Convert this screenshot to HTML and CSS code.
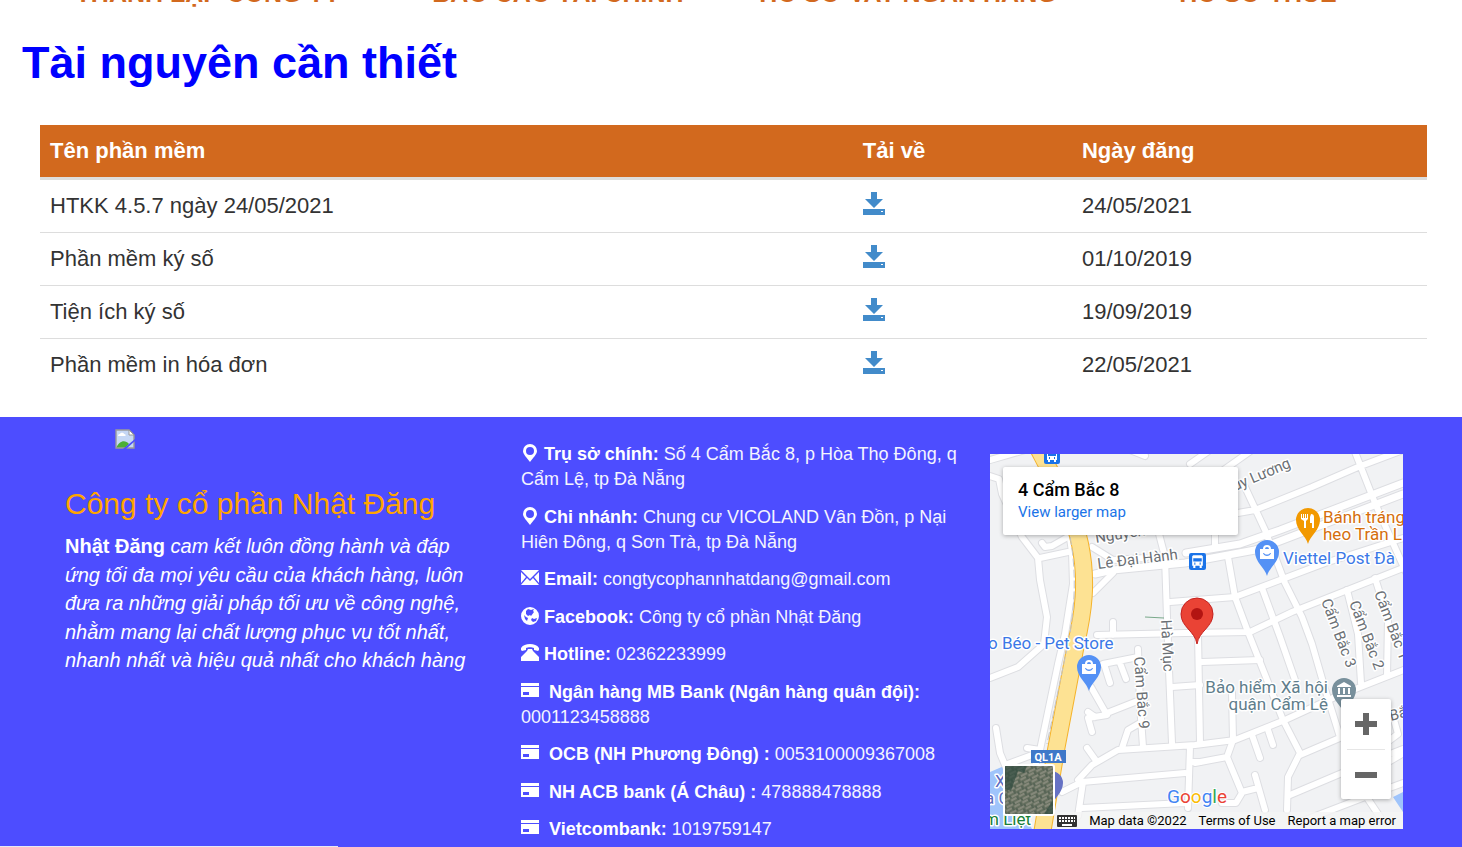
FILE: index.html
```html
<!DOCTYPE html>
<html lang="vi">
<head>
<meta charset="utf-8">
<meta name="viewport" content="width=device-width, initial-scale=1">
<title>Tài nguyên cần thiết</title>
<link rel="stylesheet" href="styles.css">
</head>
<body>
<svg class="defs" aria-hidden="true">
  <defs>
    <symbol id="i-save" viewBox="0 0 22 24"><path d="M8 0h6v7h6l-9 9-9-9h6z"/><path fill-rule="evenodd" d="M0 17h22v6H0zM18 19v1h2v-1z"/></symbol>
    <symbol id="i-pin" viewBox="0 0 18 18"><path fill-rule="evenodd" d="M9 0a7 7 0 0 1 7 7c0 3-4 7-7 11C6 14 2 10 2 7a7 7 0 0 1 7-7zm0 3a4 4 0 1 0 0 8 4 4 0 0 0 0-8z"/></symbol>
    <symbol id="i-mail" viewBox="0 0 18 18"><path d="M0 1h18L9 10zM0 3l5 5-5 6zM18 3l-5 5 5 6zM6 9l3 3 3-3 6 7H0z"/></symbol>
    <symbol id="i-globe" viewBox="0 0 18 18"><path fill-rule="evenodd" d="M9 0a9 9 0 1 1 0 18A9 9 0 0 1 9 0zM7 2L5 4v3l2 2 2-1 1 1 3-4-1-1 1-2-3 1zM3 8l1 4 2 2 1-3-2-1zM11 11l-1 2 2 2 3-1 1-3-3 1z"/></symbol>
    <symbol id="i-phone" viewBox="0 0 18 18"><path d="M0 6V4c2-3 5-4 9-4s7 1 9 4v2l-1 1-4-1V4c-2-1-6-1-8 0v2L1 7z"/><path d="M7 5h4l1 2 6 6v4H0v-4l6-6z"/></symbol>
    <symbol id="i-card" viewBox="0 0 18 18"><path d="M0 1h18v3H0z"/><path fill-rule="evenodd" d="M0 5h18v10H0zm2 5v3h6v-3z"/></symbol>
    <symbol id="i-bus" viewBox="0 0 16 16"><rect width="16" height="16" rx="2" fill="#1a73e8"/><path fill="#fff" fill-rule="evenodd" d="M4 2h8l1 1v9h-1v2h-2v-2H6v2H4v-2H3V3zM4 5v3h8V5zM5 9v2h1V9zM10 9v2h1V9z"/></symbol>
    <symbol id="i-place" viewBox="-13 -13 26 38" overflow="visible"><path d="M0 24C-2 16-12 10-12 0a12 12 0 1 1 24 0C12 10 2 16 0 24z"/></symbol>
    <symbol id="i-bag" viewBox="0 0 14 14"><path fill="#fff" fill-rule="evenodd" d="M0 4h3a4 4 0 0 1 8 0h3v10H0zM5 4h4a2 2 0 0 0-4 0zM3 8c1 4 7 4 8 0h-1c-1 2-5 2-6 0z"/></symbol>
  </defs>
</svg>

<nav class="nav">
  <a href="#">THÀNH LẬP CÔNG TY</a>
  <a href="#">BÁO CÁO TÀI CHÍNH</a>
  <a href="#">HỒ SƠ VAY NGÂN HÀNG</a>
  <a href="#">HỒ SƠ THUẾ</a>
</nav>

<main class="main">
  <h1 class="title">Tài nguyên cần thiết</h1>
  <table class="files">
    <thead>
      <tr><th class="c-name">Tên phần mềm</th><th class="c-get">Tải về</th><th>Ngày đăng</th></tr>
    </thead>
    <tbody>
      <tr><td>HTKK 4.5.7 ngày 24/05/2021</td><td><a class="get" href="#" aria-label="Tải về HTKK 4.5.7"><svg><use href="#i-save"/></svg></a></td><td>24/05/2021</td></tr>
      <tr><td>Phần mềm ký số</td><td><a class="get" href="#" aria-label="Tải về Phần mềm ký số"><svg><use href="#i-save"/></svg></a></td><td>01/10/2019</td></tr>
      <tr><td>Tiện ích ký số</td><td><a class="get" href="#" aria-label="Tải về Tiện ích ký số"><svg><use href="#i-save"/></svg></a></td><td>19/09/2019</td></tr>
      <tr><td>Phần mềm in hóa đơn</td><td><a class="get" href="#" aria-label="Tải về Phần mềm in hóa đơn"><svg><use href="#i-save"/></svg></a></td><td>22/05/2021</td></tr>
    </tbody>
  </table>
</main>

<footer class="footer">
  <section class="about">
    <svg class="logo" viewBox="0 0 20 20" aria-hidden="true">
      <path fill="#c5d7f5" d="M1 1h13l5 5v13H1z"/>
      <path fill="#fff" d="M3 7c0-2 2-2 2-2 1-2 4-1 4 0 2 0 2 2 1 2z"/>
      <path fill="#4caf35" d="M1 19c3-7 9-9 13-4l-4 4z"/>
      <path fill="none" stroke="#9a9a9a" stroke-width="1.4" d="M1 19V1h13l5 5v13z"/>
      <path fill="#fff" stroke="#9a9a9a" d="M14 1v5h5z"/>
      <path fill="#4d4dff" d="M20 10v2l-9 8H8z"/>
    </svg>
    <h2 class="company">Công ty cổ phần Nhật Đăng</h2>
    <p class="pledge"><strong>Nhật Đăng</strong> <em>cam kết luôn đồng hành và đáp ứng tối đa mọi yêu cầu của khách hàng, luôn đưa ra những giải pháp tối ưu về công nghệ, nhằm mang lại chất lượng phục vụ tốt nhất, nhanh nhất và hiệu quả nhất cho khách hàng</em></p>
  </section>

  <ul class="contact">
    <li><svg class="ico"><use href="#i-pin"/></svg> <strong>Trụ sở chính:</strong> Số 4 Cẩm Bắc 8, p Hòa Thọ Đông, q Cẩm Lệ, tp Đà Nẵng</li>
    <li><svg class="ico"><use href="#i-pin"/></svg> <strong>Chi nhánh:</strong> Chung cư VICOLAND Vân Đồn, p Nại Hiên Đông, q Sơn Trà, tp Đà Nẵng</li>
    <li><svg class="ico"><use href="#i-mail"/></svg> <strong>Email:</strong> congtycophannhatdang@gmail.com</li>
    <li><svg class="ico"><use href="#i-globe"/></svg> <strong>Facebook:</strong> Công ty cổ phần Nhật Đăng</li>
    <li><svg class="ico"><use href="#i-phone"/></svg> <strong>Hotline:</strong> 02362233999</li>
    <li><svg class="ico"><use href="#i-card"/></svg>&nbsp; <strong>Ngân hàng MB Bank (Ngân hàng quân đội):</strong> 0001123458888</li>
    <li><svg class="ico"><use href="#i-card"/></svg>&nbsp; <strong>OCB (NH Phương Đông) :</strong> 0053100009367008</li>
    <li><svg class="ico"><use href="#i-card"/></svg>&nbsp; <strong>NH ACB bank (Á Châu) :</strong> 478888478888</li>
    <li><svg class="ico"><use href="#i-card"/></svg>&nbsp; <strong>Vietcombank:</strong> 1019759147</li>
  </ul>

  <section class="map" aria-label="Bản đồ">
    <svg class="canvas" viewBox="0 0 413 375" preserveAspectRatio="xMidYMid slice">
      <defs>
        <g id="roads">
          <path d="M0 6 35-4M0 22 9 25 12 40 32 83 48 104 50 126 57 163 54 190 28 213 0 224M50 104 78 98M52 89 55 93 62 92 76 84M6 274 10 299 15 311 42 301M37 294 50 296"/>
          <path d="M78 70 82 98 83 130 75 180 68 210 50 296 45 312"/>
          <path d="M140-4 155 2M200 10 220-4M228 20 262-4M103 139 123 119M102 93 123 106 155 104M168 76 175 103 177 163 179 216 182 289M180 148 245 143 335 109 413 84M107 181 195 179 260 178 302 158 413 114M123 168V181"/>
          <path d="M190 66 248 59 265 56 322 33 368 13 413-4M255 33 275 76 295 129 312 163 322 190 335 235 350 283M365-2 385 49 416 118M225 79V92M238 103 245 143 258 178 293 266 310 299 298 323 297 356M272 134 290 183 305 226"/>
          <path d="M357 136 368 180 371 229M385 124 398 165 397 222M208 180 210 289M212 208 270 206M242 238 243 286 237 303 252 339 246 349 232 349M205 309 237 303M262 281 270 304M278 276 283 291M265 321 275 356M252 338 268 334M310 301 352 283M300 341 352 319 413 295M310 368 375 343 413 329M378 345 392 366"/>
          <path d="M113 210 148 203M115 213 120 229M130 209 136 225M101 233 117 261 98 264 102 278M98 258 105 263M117 259 155 244M148 195 150 250 153 293M150 269 138 276 132 294M97 294 107 308M72 338 92 328 195 319M88 326 102 311 128 296 205 291 245 286 295 266 345 243 416 215M200 293 198 354M92 354 195 349M93 328 88 362M182 233 210 231M202 308H210"/>
          <path d="M390 272 403 262 413 258M403 262 408 280 392 292M395 310 412 300"/>
        </g>
        <g id="mainroads"><path d="M105 120 123 116 195 109 265 96 290 87 413 40M196 99 250 90 290 76 413 29"/></g>
        <pattern id="aerial" width="9" height="7" patternUnits="userSpaceOnUse" patternTransform="rotate(-28)">
          <rect width="9" height="7" fill="#66705f"/><path stroke="#85887a" stroke-width="2" d="M0 1h6M2 5h7"/><path stroke="#48584c" d="M7 0v4M1 3v3"/>
        </pattern>
      </defs>
      <rect width="413" height="375" fill="#f1f2f4"/>
      <path fill="#9fc4fb" d="M0 318 14 312 30 352 42 375H0zM403 343 413 338V358z"/>
      <use href="#roads" class="casing"/>
      <use href="#mainroads" class="casing wide"/>
      <use href="#roads" class="fill"/>
      <use href="#mainroads" class="fill wide"/>
      <path class="hw-edge" d="M48-6C72 40 84 62 90 90 98 128 93 160 86 190L66 296 52 380"/>
      <path class="hw" d="M48-6C72 40 84 62 90 90 98 128 93 160 86 190L66 296 52 380"/>
      <path class="lane" d="M78 72C86 110 86 140 80 180L57 290"/>
      <path stroke="#79a98a" d="M155 163l19 1"/>

      <g class="street">
        <text transform="translate(106 89) rotate(-9)">Nguyễn</text>
        <text transform="translate(108 115) rotate(-7)">Lê Đại Hành</text>
        <text transform="translate(245 37) rotate(-23)">uy Lương</text>
        <text transform="translate(171 166) rotate(87)">Hà Mục</text>
        <text transform="translate(144 203) rotate(86)">Cẩm Bắc 9</text>
        <text transform="translate(331 147) rotate(69)">Cẩm Bắc 3</text>
        <text transform="translate(359 149) rotate(69)">Cẩm Bắc 2</text>
        <text transform="translate(384 139) rotate(69)">Cẩm Bắc 1</text>
        <text transform="translate(401 267) rotate(-15)">Bắc</text>
      </g>
      <g class="poi">
        <text x="293" y="110" fill="#3b78e7">Viettel Post Đà</text>
        <text x="-2" y="195" fill="#3b78e7">o Béo - Pet Store</text>
        <text x="333" y="69" fill="#d56e0c">Bánh tráng</text>
        <text x="333" y="86" fill="#d56e0c">heo Trần L</text>
        <text x="338" y="239" fill="#607d8b" text-anchor="end">Bảo hiểm Xã hội</text>
        <text x="338" y="256" fill="#607d8b" text-anchor="end">quận Cẩm Lệ</text>
        <text x="5" y="333" fill="#5c6bc0">X</text>
        <text x="-5" y="350" fill="#5c6bc0">a C</text>
        <text x="-6" y="371" fill="#188038">m Liệt</text>
      </g>
      <use href="#i-bus" x="54" y="-6" width="16" height="16"/>
      <use href="#i-bus" x="199" y="99" width="17" height="17"/>
      <use href="#i-place" x="305" y="53" width="26" height="38" fill="#f29900"/>
      <path fill="#fff" d="M311 60h1v4h1v-4h1v4h1v-4h1v4h1v-4h1v5l-2 2v7h-2v-7l-3-2zM321 60c2 0 3 1 3 3v11h-2v-5h-2v-6z"/>
      <use href="#i-place" x="264" y="85" width="26" height="38" fill="#5491f5"/>
      <use href="#i-bag" x="270" y="91" width="14" height="14"/>
      <use href="#i-place" x="86" y="200" width="26" height="38" fill="#5491f5"/>
      <use href="#i-bag" x="92" y="206" width="14" height="14"/>
      <use href="#i-place" x="341" y="223" width="26" height="38" fill="#78909c"/>
      <path fill="#fff" d="M354 228l7 4v1h-14v-1zM348 234h2v6h-2zM353 234h2v6h-2zM358 234h2v6h-2zM347 241h14v2h-14z"/>
      <use href="#i-place" x="48" y="316" width="26" height="38" fill="#6672c4"/>
      <path fill="#ea4335" stroke="#c5221f" d="M207 190c-2-13-16-17-16-30a16 16 0 0 1 32 0c0 13-14 17-16 30z"/>
      <circle cx="207" cy="160" r="6" fill="#b31412"/>
      <rect x="41" y="296" width="35" height="13" fill="#3f78c9"/>
      <text class="shield" x="58" y="307" text-anchor="middle">QL1A</text>
      <rect class="thumb" x="14" y="311" width="50" height="50" rx="2" fill="url(#aerial)"/>
      <path fill="#304c40" opacity=".7" d="M15 312h22l-3 7-6-2-7 20-6-2zM54 360l9-14v14z"/>
      <text class="google" x="177" y="349"><tspan fill="#4285f4">G</tspan><tspan fill="#ea4335">o</tspan><tspan fill="#fbbc04">o</tspan><tspan fill="#4285f4">g</tspan><tspan fill="#34a853">l</tspan><tspan fill="#ea4335">e</tspan></text>
    </svg>
    <div class="place">
      <strong>4 Cẩm Bắc 8</strong>
      <a href="#">View larger map</a>
    </div>
    <div class="zoom">
      <button type="button" aria-label="Phóng to"><svg viewBox="0 0 22 22"><path d="M8 0h6v8h8v6h-8v8H8v-8H0V8h8z"/></svg></button>
      <button type="button" aria-label="Thu nhỏ"><svg viewBox="0 0 22 22"><path d="M0 8h22v6H0z"/></svg></button>
    </div>
    <div class="credits">
      <button type="button" aria-label="Phím tắt"><svg viewBox="0 0 20 12"><rect width="20" height="12" rx="1" fill="#333"/><path stroke="#fff" stroke-width="2" stroke-dasharray="2 1" d="M2 3h16M2 6h16"/><path stroke="#fff" stroke-width="2" d="M5 10h10"/></svg></button>
      <span>Map data ©2022</span>
      <a href="#">Terms of Use</a>
      <a href="#">Report a map error</a>
    </div>
  </section>
</footer>
<div class="status"></div>
</body>
</html>
```
FILE: styles.css
```css
* { box-sizing: border-box; }

html { height: 100%; overflow: hidden; }

body {
  margin: 0;
  min-height: 100%;
  display: flex;
  flex-direction: column;
  position: relative;
  background: #fff;
  color: #333;
  font-family: "Liberation Sans", Arial, sans-serif;
  font-size: 18px;
}

.defs { position: absolute; width: 0; height: 0; }

/* Navigation, scrolled almost out of view */
.nav {
  display: grid;
  grid-template-columns: repeat(4, 1fr);
  margin-top: -22px;
  padding: 0 29px 0 33px;
  text-align: center;
  font-size: 25px;
  font-weight: bold;
  line-height: 30px;
}
.nav a { color: #d2691e; text-decoration: none; }

.main { padding: 0 35px 26px 40px; }

.title {
  margin: 30px 0 37px -18px;
  color: #00f;
  font-size: 45px;
  line-height: 50px;
}

.files {
  width: 100%;
  border-collapse: collapse;
  table-layout: fixed;
  font-size: 22px;
  line-height: 32px;
}
.files th {
  padding: 10px;
  background: #d2691e;
  color: #fff;
  text-align: left;
  border-bottom: 3px solid #ddd;
}
.files td { padding: 10px; border-top: 1px solid #ddd; }
.files tbody tr:first-child td { border-top: 0; }
.c-name { width: 58.6%; }
.c-get { width: 15.8%; }
.get { display: block; color: #428bca; }
.get svg { display: block; width: 22px; height: 24px; margin-bottom: 4px; fill: currentColor; }

.footer {
  flex: 1;
  display: grid;
  grid-template-columns: 456fr 469fr 413fr;
  padding: 12px 59px 4px 65px;
  background: #4d4dff;
  color: #fff;
}

.about { padding-right: 45px; }
.logo { display: block; width: 20px; height: 20px; margin-left: 50px; }
.company {
  margin: 38px 0 12px;
  color: #ffa500;
  font-size: 30px;
  font-weight: normal;
  line-height: 33px;
}
.pledge { margin: 0; font-size: 20px; line-height: 1.43; }

.contact {
  display: flex;
  flex-direction: column;
  gap: 0.5lh;
  margin: 13px 0 0;
  padding: 0 30px 0 0;
  list-style: none;
  line-height: 25px;
  color: #f4f4ff;
}
.contact strong { color: #fff; }
.ico { width: 18px; height: 18px; vertical-align: -2px; fill: #fff; }

.map {
  position: relative;
  align-self: start;
  height: 375px;
  margin-top: 25px;
  overflow: hidden;
  font-family: Roboto, sans-serif;
}
.canvas { display: block; width: 100%; height: 100%; }
.casing, .fill { fill: none; stroke-linecap: round; stroke-linejoin: round; }
.casing { stroke: #dddee2; stroke-width: 8px; }
.fill { stroke: #fff; stroke-width: 6px; }
.casing.wide { stroke-width: 9px; }
.fill.wide { stroke-width: 7px; }
.hw-edge { fill: none; stroke: #f5b32b; stroke-width: 18px; }
.hw { fill: none; stroke: #fde293; stroke-width: 16px; }
.lane { fill: none; stroke: #c3c5c9; stroke-width: 1px; stroke-dasharray: 8 3; }
.street text, .poi text { stroke: #fff; stroke-width: 3px; stroke-linejoin: round; paint-order: stroke; }
.street { font-size: 15px; fill: #6b7075; }
.poi { font-size: 17px; }
.shield { font-size: 11px; font-weight: bold; fill: #fff; }
.thumb { stroke: #fff; stroke-width: 2px; }
.google { font-size: 19px; stroke: #fff; stroke-width: 2px; paint-order: stroke; }

.place {
  position: absolute;
  top: 13px;
  left: 13px;
  width: 235px;
  padding: 12px 15px;
  display: grid;
  background: #fff;
  border-radius: 2px;
  box-shadow: 0 1px 4px rgba(0, 0, 0, 0.3);
  color: #000;
  line-height: 22px;
}
.place strong { font-size: 18px; font-weight: 500; }
.place a { font-size: 15px; color: #1a73e8; text-decoration: none; }

.zoom {
  position: absolute;
  right: 12px;
  bottom: 30px;
  width: 50px;
  background: #fff;
  border-radius: 2px;
  box-shadow: 0 1px 4px rgba(0, 0, 0, 0.3);
}
.zoom button {
  display: grid;
  place-items: center;
  width: 38px;
  height: 50px;
  margin: 0 auto;
  padding: 0;
  border: 0;
  background: none;
}
.zoom button + button { border-top: 1px solid #e6e6e6; }
.zoom svg { width: 22px; height: 22px; fill: #666; }

.credits {
  position: absolute;
  right: 0;
  bottom: 0;
  display: flex;
  align-items: center;
  gap: 12px;
  padding: 0 7px 0 0;
  background: rgba(245, 245, 245, 0.8);
  font-size: 13px;
  line-height: 17px;
  color: #000;
}
.credits a { color: #000; text-decoration: none; }
.credits button { display: flex; padding: 0; border: 0; background: none; }
.credits svg { width: 20px; height: 12px; }

/* Edge of the browser's link bubble */
.status {
  position: absolute;
  left: 0;
  bottom: 0;
  width: 338px;
  height: 1px;
  background: #e8e8f4;
}
```
